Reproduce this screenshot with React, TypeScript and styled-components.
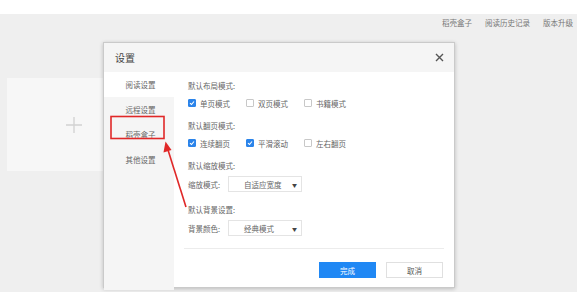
import React from "react";
import styled, { createGlobalStyle } from "styled-components";

const GlobalStyle = createGlobalStyle`
  html, body {
    margin: 0;
    padding: 0;
    width: 577px;
    height: 292px;
    overflow: hidden;
    background: #efefef;
    font-family: "Noto Sans CJK SC", "Noto Sans", sans-serif;
  }
`;

const Page = styled.div`
  position: relative;
  width: 577px;
  height: 292px;
  background: #efefef;
`;

const TopStrip = styled.div`
  height: 14px;
  background: #ffffff;
`;

const LinkBar = styled.div`
  display: flex;
  justify-content: flex-end;
  gap: 13px;
  padding: 4px 4px 0 0;
  height: 10px;
  line-height: 10px;
  font-size: 7.5px;
  color: #777;
`;

const Workspace = styled.div`
  padding: 50px 0 0 7px;
`;

const NewCard = styled.div`
  width: 134px;
  height: 93px;
  background: #f7f7f7;
  display: flex;
  align-items: center;
  justify-content: center;
`;

const Plus = styled.svg`
  width: 18px;
  height: 18px;
`;

// modal, sits over the workspace
const Dialog = styled.div`
  position: absolute;
  left: 103px;
  top: 42px;
  width: 350px;
  height: 244px;
  background: #ffffff;
  border: 1px solid #cacaca;
  box-shadow: 0 1px 4px rgba(0, 0, 0, 0.22);
  display: flex;
  flex-direction: column;
`;

const DialogHeader = styled.div`
  height: 29px;
  flex: none;
  background: #f5f5f5;
  display: flex;
  align-items: center;
  justify-content: space-between;
  padding: 0 10px 0 11px;
`;

const Title = styled.span`
  font-size: 10px;
  color: #444;
`;

const CloseButton = styled.svg`
  width: 9px;
  height: 9px;
`;

const DialogBody = styled.div`
  flex: 1;
  display: flex;
`;

const Sidebar = styled.div`
  width: 70px;
  flex: none;
  background: #f5f5f5;
  display: flex;
  flex-direction: column;
`;

const NavItem = styled.div<{ $active?: boolean }>`
  height: 25px;
  display: flex;
  align-items: center;
  justify-content: center;
  padding-left: 3px;
  font-size: 7.5px;
  color: #666;
  background: ${(p) => (p.$active ? "#ffffff" : "transparent")};
`;

const Content = styled.div`
  flex: 1;
  display: flex;
  flex-direction: column;
  padding: 8px 10px 12px 12px;
`;

const Group = styled.div<{ $gap?: number }>`
  padding-left: 2px;
  display: flex;
  flex-direction: column;
  gap: 4px;
  margin-bottom: ${(p) => p.$gap ?? 10}px;
`;

const GroupTitle = styled.div`
  height: 12px;
  line-height: 12px;
  font-size: 7.5px;
  color: #666;
`;

const CheckRow = styled.div`
  display: flex;
  height: 14px;
  align-items: center;
`;

const CheckItem = styled.label`
  width: 58px;
  display: flex;
  align-items: center;
  gap: 4px;
  font-size: 7.5px;
  color: #666;
`;

const Box = styled.span<{ $checked?: boolean }>`
  width: 8px;
  height: 8px;
  box-sizing: border-box;
  border-radius: 1px;
  border: 1px solid ${(p) => (p.$checked ? "#2b84ea" : "#c8c8c8")};
  background: ${(p) => (p.$checked ? "#2b84ea" : "#ffffff")};
  display: flex;
  align-items: center;
  justify-content: center;
`;

const SelectRow = styled.div`
  display: flex;
  align-items: center;
  height: 16px;
`;

const SelectLabel = styled.span`
  width: 40px;
  font-size: 7.5px;
  color: #666;
`;

const Select = styled.div`
  width: 74px;
  height: 16px;
  box-sizing: border-box;
  border: 1px solid #e4e4e4;
  background: #fff;
  display: flex;
  align-items: center;
  justify-content: space-between;
  padding: 0 4px 0 15px;
  font-size: 7.5px;
  color: #666;
`;

const Caret = styled.span`
  font-size: 5px;
  color: #444;
`;

const Divider = styled.div`
  height: 1px;
  background: #ececec;
  margin: 2px 0 13px -2px;
`;

const Footer = styled.div`
  display: flex;
  justify-content: flex-end;
  gap: 10px;
  padding-right: 1px;
`;

const Button = styled.button<{ $primary?: boolean }>`
  width: 57px;
  height: 16px;
  padding: 0;
  font-family: inherit;
  font-size: 7.5px;
  border: 1px solid ${(p) => (p.$primary ? "#2088f4" : "#e0e0e0")};
  background: ${(p) => (p.$primary ? "#2088f4" : "#ffffff")};
  color: ${(p) => (p.$primary ? "#ffffff" : "#555")};
`;

const Annotation = styled.svg`
  position: absolute;
  left: 0;
  top: 0;
  width: 577px;
  height: 292px;
  pointer-events: none;
`;

const Check = () => (
  <svg width="6" height="6" viewBox="0 0 6 6">
    <path d="M1 3.1 L2.5 4.5 L5 1.5" fill="none" stroke="#fff" strokeWidth="1.1" />
  </svg>
);

const CheckOption = ({ label, checked }: { label: string; checked?: boolean }) => (
  <CheckItem>
    <Box $checked={checked}>{checked && <Check />}</Box>
    {label}
  </CheckItem>
);

const navItems = ["阅读设置", "远程设置", "稻壳盒子", "其他设置"];

export default function App() {
  return (
    <Page>
      <GlobalStyle />
      <TopStrip />
      <LinkBar>
        <span>稻壳盒子</span>
        <span>阅读历史记录</span>
        <span>版本升级</span>
      </LinkBar>
      <Workspace>
        <NewCard>
          <Plus viewBox="0 0 18 18">
            <path d="M9 1 V17 M1 9 H17" stroke="#d2d2d2" strokeWidth="1.3" />
          </Plus>
        </NewCard>
      </Workspace>

      <Dialog>
        <DialogHeader>
          <Title>设置</Title>
          <CloseButton viewBox="0 0 9 9">
            <path d="M1 1 L8 8 M8 1 L1 8" stroke="#555" strokeWidth="1.4" />
          </CloseButton>
        </DialogHeader>
        <DialogBody>
          <Sidebar>
            {navItems.map((item, i) => (
              <NavItem key={item} $active={i === 0}>
                {item}
              </NavItem>
            ))}
          </Sidebar>
          <Content>
            <Group>
              <GroupTitle>默认布局模式:</GroupTitle>
              <CheckRow>
                <CheckOption label="单页模式" checked />
                <CheckOption label="双页模式" />
                <CheckOption label="书籍模式" />
              </CheckRow>
            </Group>
            <Group>
              <GroupTitle>默认翻页模式:</GroupTitle>
              <CheckRow>
                <CheckOption label="连续翻页" checked />
                <CheckOption label="平滑滚动" checked />
                <CheckOption label="左右翻页" />
              </CheckRow>
            </Group>
            <Group $gap={12}>
              <GroupTitle>默认缩放模式:</GroupTitle>
              <SelectRow>
                <SelectLabel>缩放模式:</SelectLabel>
                <Select>
                  自适应宽度<Caret>▼</Caret>
                </Select>
              </SelectRow>
            </Group>
            <Group>
              <GroupTitle>默认背景设置:</GroupTitle>
              <SelectRow>
                <SelectLabel>背景颜色:</SelectLabel>
                <Select>
                  经典模式<Caret>▼</Caret>
                </Select>
              </SelectRow>
            </Group>
            <Divider />
            <Footer>
              <Button $primary>完成</Button>
              <Button>取消</Button>
            </Footer>
          </Content>
        </DialogBody>
      </Dialog>

      <Annotation viewBox="0 0 577 292">
        <rect x="111" y="116.5" width="53" height="22" fill="none" stroke="#e02828" strokeWidth="1.6" />
        <line x1="186" y1="207" x2="168" y2="150" stroke="#e02828" strokeWidth="1.6" />
        <path d="M165.5 141.5 L163.5 152.5 L171.5 150 Z" fill="#e02828" />
      </Annotation>
    </Page>
  );
}
